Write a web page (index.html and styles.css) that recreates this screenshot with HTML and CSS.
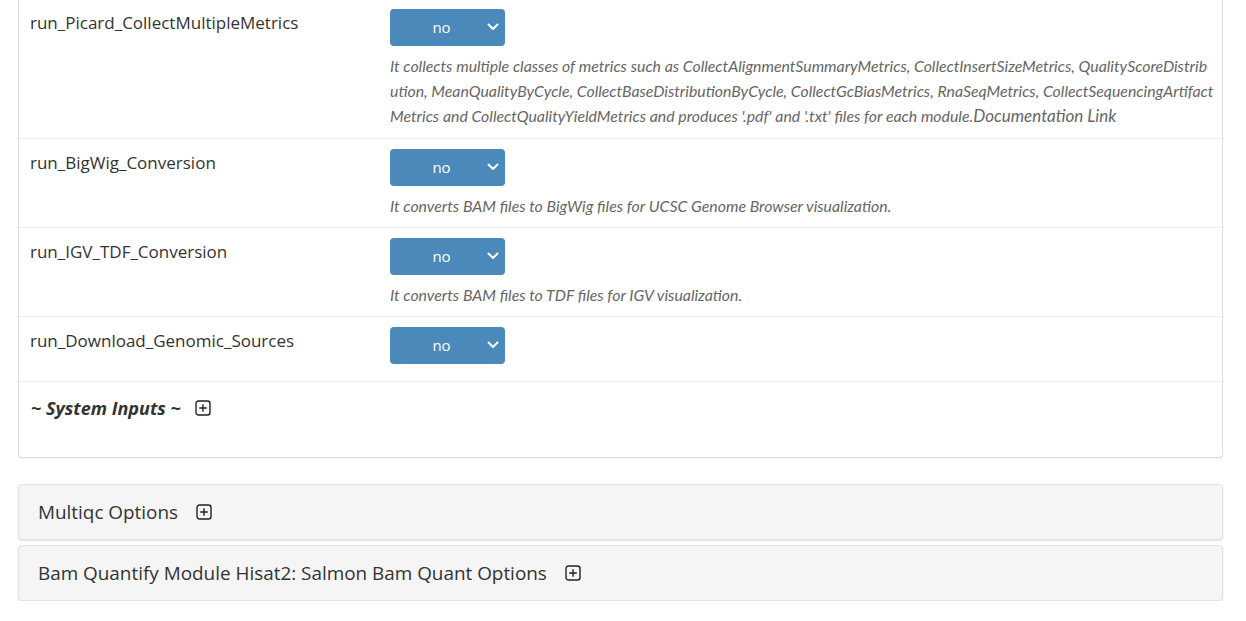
FILE: index.html
```html
<!DOCTYPE html>
<html>
<head>
<meta charset="utf-8">
<link rel="stylesheet" href="styles.css">
</head>
<body>
<div class="page">
  <div class="panel">
    <div class="row row-first">
      <div class="label">run_Picard_CollectMultipleMetrics</div>
      <div class="field">
        <div class="select"><span class="val">no</span><svg class="chev" viewBox="0 0 12 8" width="12" height="8"><path d="M1.5 1.5 L6 6 L10.5 1.5" fill="none" stroke="#fff" stroke-width="2" stroke-linecap="round" stroke-linejoin="round"/></svg></div>
        <div class="desc">It collects multiple classes of metrics such as CollectAlignmentSummaryMetrics, CollectInsertSizeMetrics, QualityScoreDistribution, MeanQualityByCycle, CollectBaseDistributionByCycle, CollectGcBiasMetrics, RnaSeqMetrics, CollectSequencingArtifactMetrics and CollectQualityYieldMetrics and produces '.pdf' and '.txt' files for each module.<span class="doc">Documentation Link</span></div>
      </div>
    </div>
    <div class="row">
      <div class="label">run_BigWig_Conversion</div>
      <div class="field">
        <div class="select"><span class="val">no</span><svg class="chev" viewBox="0 0 12 8" width="12" height="8"><path d="M1.5 1.5 L6 6 L10.5 1.5" fill="none" stroke="#fff" stroke-width="2" stroke-linecap="round" stroke-linejoin="round"/></svg></div>
        <div class="desc">It converts BAM files to BigWig files for UCSC Genome Browser visualization.</div>
      </div>
    </div>
    <div class="row">
      <div class="label">run_IGV_TDF_Conversion</div>
      <div class="field">
        <div class="select"><span class="val">no</span><svg class="chev" viewBox="0 0 12 8" width="12" height="8"><path d="M1.5 1.5 L6 6 L10.5 1.5" fill="none" stroke="#fff" stroke-width="2" stroke-linecap="round" stroke-linejoin="round"/></svg></div>
        <div class="desc">It converts BAM files to TDF files for IGV visualization.</div>
      </div>
    </div>
    <div class="row row-plain">
      <div class="label">run_Download_Genomic_Sources</div>
      <div class="field">
        <div class="select"><span class="val">no</span><svg class="chev" viewBox="0 0 12 8" width="12" height="8"><path d="M1.5 1.5 L6 6 L10.5 1.5" fill="none" stroke="#fff" stroke-width="2" stroke-linecap="round" stroke-linejoin="round"/></svg></div>
      </div>
    </div>
    <div class="sys">
      <span class="sys-title">~ System Inputs ~</span>
      <svg class="plus" viewBox="0 0 16 16" width="16" height="16"><rect x="1" y="1" width="14" height="14" rx="2.5" fill="none" stroke="#222" stroke-width="1.4"/><path d="M8 4.2 V11.8 M4.2 8 H11.8" stroke="#222" stroke-width="1.4"/></svg>
    </div>
  </div>

  <div class="card">
    <span class="card-title">Multiqc Options</span>
    <svg class="plus" viewBox="0 0 16 16" width="16" height="16"><rect x="1" y="1" width="14" height="14" rx="2.5" fill="none" stroke="#222" stroke-width="1.4"/><path d="M8 4.2 V11.8 M4.2 8 H11.8" stroke="#222" stroke-width="1.4"/></svg>
  </div>
  <div class="card">
    <span class="card-title">Bam Quantify Module Hisat2: Salmon Bam Quant Options</span>
    <svg class="plus" viewBox="0 0 16 16" width="16" height="16"><rect x="1" y="1" width="14" height="14" rx="2.5" fill="none" stroke="#222" stroke-width="1.4"/><path d="M8 4.2 V11.8 M4.2 8 H11.8" stroke="#222" stroke-width="1.4"/></svg>
  </div>
</div>
</body>
</html>
```

FILE: styles.css
```css
html, body {
  margin: 0;
  padding: 0;
  background: #fff;
}
body {
  font-family: "Open Sans", "Noto Sans", sans-serif;
  color: #333;
}
.page {
  padding: 0 23px 0 18px;
}
.panel {
  border: 1px solid #ddd;
  border-top: none;
  border-radius: 0 0 4px 4px;
  background: #fff;
  box-shadow: 0 1px 1px rgba(0,0,0,.05);
}
.row {
  display: flex;
  padding: 10px 8px 9px 11px;
  border-bottom: 1px solid #eee;
}
.row-first {
  padding-top: 9px;
  padding-bottom: 10px;
}
.row-plain {
  padding-bottom: 17px;
}
.label {
  width: 360px;
  flex: none;
  font-size: 17px;
  line-height: 26px;
  padding-top: 1px;
  color: #333;
}
.field {
  flex: 1;
  min-width: 0;
}
.select {
  width: 115px;
  height: 37px;
  box-sizing: border-box;
  background: #4a89b9;
  border-radius: 4px;
  display: flex;
  align-items: center;
  position: relative;
  color: #fff;
}
.val {
  width: 103px;
  text-align: center;
  font-size: 15px;
  margin-top: -2px;
}
.chev {
  position: absolute;
  right: 6px;
  top: 14px;
}
.desc {
  margin-top: 7px;
  font-family: Lato, "Open Sans", sans-serif;
  font-style: italic;
  font-size: 15.85px;
  line-height: 25px;
  color: #666;
  word-break: break-all;
}
.doc {
  font-size: 17px;
}
.sys {
  display: flex;
  align-items: center;
  height: 75px;
  padding: 0 12px 23px 12px;
  box-sizing: border-box;
}
.sys-title {
  font-weight: bold;
  font-style: italic;
  font-size: 18px;
  color: #333;
}
.plus {
  margin-left: 14px;
  flex: none;
}
.card {
  display: flex;
  align-items: center;
  height: 56px;
  box-sizing: border-box;
  padding: 0 19px;
  background: #f5f5f5;
  border: 1px solid #e3e3e3;
  border-radius: 4px;
  box-shadow: 0 1px 2px rgba(0,0,0,.12);
  margin-top: 5px;
}
.panel + .card {
  margin-top: 26px;
}
.card-title {
  font-size: 18.9px;
  color: #333;
}
.card .plus {
  margin-left: 18px;
}
```
